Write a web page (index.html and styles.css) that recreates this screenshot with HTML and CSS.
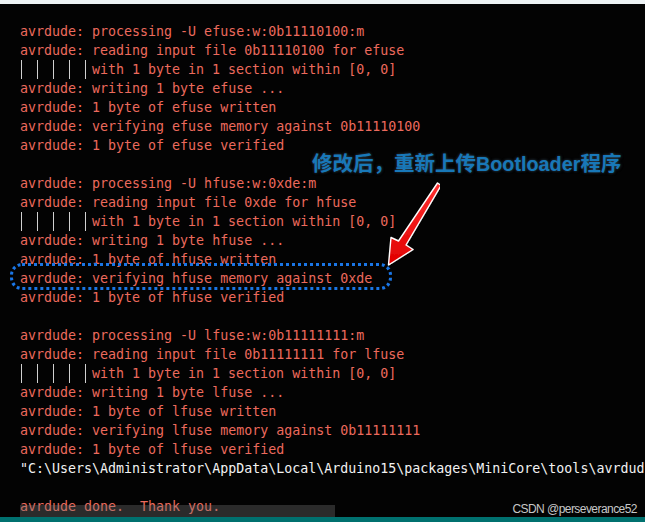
FILE: index.html
```html
<!DOCTYPE html>
<html lang="zh-CN">
<head>
<meta charset="utf-8">
<title>avrdude output</title>
<link rel="stylesheet" href="styles.css">
</head>
<body>
<div class="page">
  <div class="topbar"></div>
  <div class="output">
    <div class="console">
      <div class="ln">avrdude: processing -U efuse:w:0b11110100:m</div>
      <div class="ln">avrdude: reading input file 0b11110100 for efuse</div>
      <div class="ln"><span class="pipe"></span><span class="pipe"></span><span class="pipe"></span><span class="pipe"></span><span class="pipe last"></span>with 1 byte in 1 section within [0, 0]</div>
      <div class="ln">avrdude: writing 1 byte efuse ...</div>
      <div class="ln">avrdude: 1 byte of efuse written</div>
      <div class="ln">avrdude: verifying efuse memory against 0b11110100</div>
      <div class="ln">avrdude: 1 byte of efuse verified</div>
      <div class="ln"></div>
      <div class="ln">avrdude: processing -U hfuse:w:0xde:m</div>
      <div class="ln">avrdude: reading input file 0xde for hfuse</div>
      <div class="ln"><span class="pipe"></span><span class="pipe"></span><span class="pipe"></span><span class="pipe"></span><span class="pipe last"></span>with 1 byte in 1 section within [0, 0]</div>
      <div class="ln">avrdude: writing 1 byte hfuse ...</div>
      <div class="ln">avrdude: 1 byte of hfuse written</div>
      <div class="ln">avrdude: verifying hfuse memory against 0xde</div>
      <div class="ln">avrdude: 1 byte of hfuse verified</div>
      <div class="ln"></div>
      <div class="ln">avrdude: processing -U lfuse:w:0b11111111:m</div>
      <div class="ln">avrdude: reading input file 0b11111111 for lfuse</div>
      <div class="ln"><span class="pipe"></span><span class="pipe"></span><span class="pipe"></span><span class="pipe"></span><span class="pipe last"></span>with 1 byte in 1 section within [0, 0]</div>
      <div class="ln">avrdude: writing 1 byte lfuse ...</div>
      <div class="ln">avrdude: 1 byte of lfuse written</div>
      <div class="ln">avrdude: verifying lfuse memory against 0b11111111</div>
      <div class="ln">avrdude: 1 byte of lfuse verified</div>
      <div class="ln white">"C:\Users\Administrator\AppData\Local\Arduino15\packages\MiniCore\tools\avrdud</div>
      <div class="ln"></div>
      <div class="ln">avrdude done.  Thank you.</div>
    </div>

    <div class="highlight"></div>

    <div class="note">修改后，重新上传<span class="latin">Bootloader</span>程序</div>

    <svg class="arrow" width="70" height="100" viewBox="370 175 70 100" xmlns="http://www.w3.org/2000/svg">
      <defs>
        <linearGradient id="ag" x1="0" y1="0" x2="0" y2="1">
          <stop offset="0" stop-color="#ff3030"/>
          <stop offset="1" stop-color="#e00000"/>
        </linearGradient>
        <filter id="sh" x="-30%" y="-30%" width="160%" height="160%">
          <feDropShadow dx="1" dy="1" stdDeviation="1.2" flood-color="#000" flood-opacity="0.8"/>
        </filter>
      </defs>
      <polygon points="437.5,183 441,185.5 406,245 413,249.5 388.5,265 391,237.5 398.5,241"
               fill="url(#ag)" stroke="#ffffff" stroke-width="1.4" stroke-linejoin="round" filter="url(#sh)"/>
    </svg>

    <div class="scrollthumb"></div>
    <div class="watermark">CSDN @perseverance52</div>
  </div>
  <div class="statusbar"></div>
</div>
</body>
</html>
```

FILE: styles.css
```css
html, body {
  margin: 0;
  padding: 0;
  background: #030303;
}

.page {
  width: 645px;
  height: 522px;
  display: flex;
  flex-direction: column;
  overflow: hidden;
  background: #030303;
}

.topbar {
  height: 4px;
  flex: 0 0 4px;
  background: #eef3f5;
}

.output {
  position: relative;
  flex: 1 1 auto;
  overflow: hidden;
  background: #030303;
}

.console {
  padding: 18px 0 0 20px;
  font-family: "DejaVu Sans Mono", "Liberation Mono", monospace;
  font-size: 13.3px;
  line-height: 19px;
  color: #ec6a5d;
}

.ln {
  height: 19px;
  white-space: pre;
}

.ln.white {
  color: #f2f2f2;
}

.pipe {
  display: inline-block;
  width: 16px;
  height: 19px;
  vertical-align: top;
  box-sizing: border-box;
  border-left: 1px solid #d0d0d0;
  margin-left: 1px;
  margin-right: -1px;
}

.pipe.last {
  width: 8px;
}

.highlight {
  position: absolute;
  left: 10px;
  top: 259px;
  width: 382px;
  height: 27px;
  box-sizing: border-box;
  border: 3px dotted #1a76e6;
  border-radius: 12px;
}

.note {
  position: absolute;
  left: 312px;
  top: 144px;
  font-family: "Noto Sans CJK SC", "Liberation Sans", sans-serif;
  font-weight: 700;
  font-size: 20.5px;
  line-height: 28px;
  color: #1878b8;
  white-space: nowrap;
  text-shadow: 0 0 3px #34495a, 1px 1px 2px #000;
}

.note .latin {
  font-family: "Liberation Sans", sans-serif;
  font-size: 19.8px;
}

.arrow {
  position: absolute;
  left: 370px;
  top: 171px;
}

.scrollthumb {
  position: absolute;
  left: 20px;
  bottom: 0;
  width: 315px;
  height: 12px;
  background: rgba(121, 121, 121, 0.35);
}

.watermark {
  position: absolute;
  right: 8px;
  bottom: 1px;
  font-family: "Liberation Sans", "Noto Sans", sans-serif;
  font-size: 12px;
  letter-spacing: -0.55px;
  line-height: 14px;
  color: #c8c8c8;
  white-space: nowrap;
}

.statusbar {
  height: 5px;
  flex: 0 0 5px;
  background: #00716f;
}
```
